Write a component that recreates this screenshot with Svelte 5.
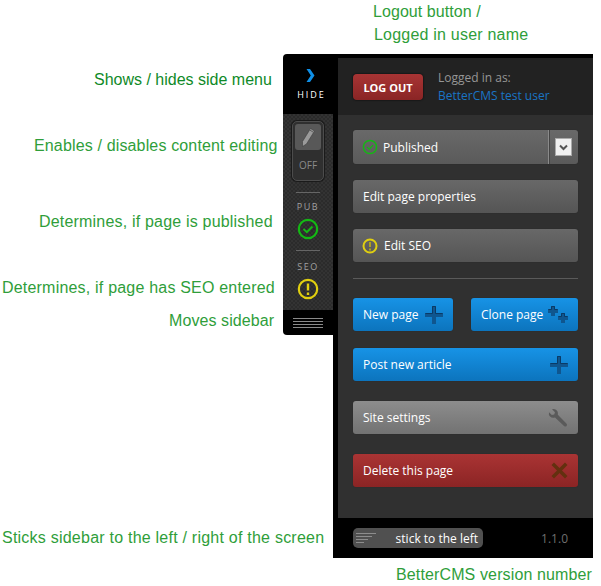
<script>
  const notes = [
    { text: "Logout button /", x: 373, y: 2, ls: 0.07 },
    { text: "Logged in user name", x: 374, y: 25, ls: 0.21 },
    { text: "Shows / hides side menu", x: 94, y: 70, ls: 0, dark: true },
    { text: "Enables / disables content editing", x: 34, y: 136, ls: 0.15 },
    { text: "Determines, if page is published", x: 39, y: 212, ls: 0.19 },
    { text: "Determines, if page has SEO entered", x: 2, y: 278, ls: 0.2 },
    { text: "Moves sidebar", x: 169, y: 311, ls: 0.08 },
    { text: "Sticks sidebar to the left / right of the screen", x: 2, y: 528, ls: 0.23 },
    { text: "BetterCMS version number", x: 396, y: 565, ls: 0.13 }
  ];
</script>

<div class="canvas">
  {#each notes as note}
    <span class="note" class:dark={note.dark} style="left: {note.x}px; top: {note.y}px; letter-spacing: {note.ls}px;">{note.text}</span>
  {/each}

  <div class="sidebar">
    <div class="rail">
      <div class="rail-top">
        <svg class="chevron" width="9" height="13" viewBox="0 0 9 13">
          <path d="M0.500 0 L4 0 L8.500 6.500 L4 13 L0.500 13 L4.800 6.500 Z" fill="#0f8fe6" />
        </svg>
        <span class="hide">HIDE</span>
      </div>
      <div class="rail-body">
        <div class="toggle">
          <div class="toggle-btn">
            <svg width="16" height="21" viewBox="0 0 16 21">
              <path d="M10.500 1.500 L14.500 4 L6.500 17 L2.500 19.500 L2.500 14.500 Z" fill="#9a9a9a" stroke="#3c3c3c" stroke-width=".6" />
              <path d="M9.700 3 L13.600 5.400" stroke="#5e5e5e" stroke-width="1" />
            </svg>
          </div>
          <span>OFF</span>
        </div>
        <div class="rule"></div>
        <span class="tag">PUB</span>
        <svg class="status" width="22" height="22" viewBox="0 0 22 22">
          <circle cx="11" cy="11" r="9.200" fill="none" stroke="#14b814" stroke-width="2.200" />
          <path d="M6.500 11 L9.800 14.200 L15.500 8.500" fill="none" stroke="#14b814" stroke-width="2" />
        </svg>
        <div class="rule second"></div>
        <span class="tag seo-tag">SEO</span>
        <svg class="status" width="22" height="22" viewBox="0 0 22 22">
          <circle cx="11" cy="11" r="9.200" fill="none" stroke="#e0cf10" stroke-width="2.200" />
          <path d="M11 5.500 V12.500 M11 14.500 V17" fill="none" stroke="#e0cf10" stroke-width="2.400" />
        </svg>
      </div>
      <div class="grip">
        <i></i><i></i><i></i><i></i>
      </div>
    </div>

    <div class="panel">
      <header>
        <button class="logout">LOG OUT</button>
        <div class="who">
          <span>Logged in as:</span>
          <span class="user">BetterCMS test user</span>
        </div>
      </header>

      <div class="content">
        <div class="btn grey published">
          <svg width="16" height="16" viewBox="0 0 16 16">
            <circle cx="8" cy="8" r="6.600" fill="none" stroke="#14b814" stroke-width="1.500" />
            <path d="M4.800 8 L7.200 10.200 L11 6.200" fill="none" stroke="#14b814" stroke-width="1.300" />
          </svg>
          <span>Published</span>
          <div class="select">
            <div class="arrow">
              <svg width="9" height="7" viewBox="0 0 9 7">
                <path d="M1 1.500 L4.500 5 L8 1.500" fill="none" stroke="#555" stroke-width="2" />
              </svg>
            </div>
          </div>
        </div>

        <div class="btn grey">Edit page properties</div>

        <div class="btn grey seo">
          <svg width="16" height="16" viewBox="0 0 16 16">
            <circle cx="8" cy="8" r="6.500" fill="none" stroke="#e0cf10" stroke-width="2" />
            <path d="M8 4 V9 M8 10.500 V12.500" stroke="#b5a81c" stroke-width="1.800" />
          </svg>
          <span>Edit SEO</span>
        </div>

        <div class="divider"></div>

        <div class="pair">
          <div class="btn blue new">
            <span>New page</span>
            <svg width="18" height="18" viewBox="0 0 18 18">
              <path d="M7 0 H11 V7 H18 V11 H11 V18 H7 V11 H0 V7 H7 Z" fill="#0f568f" />
              <path d="M7.500 .5 H10.500 V7.500 H17.500 M0.500 7.500 H7.500 V.5" fill="none" stroke="#0a3a66" />
            </svg>
          </div>
          <div class="btn blue clone">
            <span>Clone page</span>
            <svg width="20" height="18" viewBox="0 0 20 18">
              <path d="M3 0 H7 V3 H10 V7 H7 V10 H3 V7 H0 V3 H3 Z" fill="#0f568f" />
              <path d="M13 7 H17 V10 H20 V14 H17 V17 H13 V14 H10 V10 H13 Z" fill="#0f568f" />
              <path d="M3.500 .5 H6.500 V3.500 H9.500 M.5 3.500 H3.500 V.5 M13.500 7.500 H16.500 V10.500 H19.500 M10.500 10.500 H13.500 V7.500" fill="none" stroke="#0a3a66" />
            </svg>
          </div>
        </div>

        <div class="btn blue wide">
          <span>Post new article</span>
          <svg width="18" height="18" viewBox="0 0 18 18">
            <path d="M7 0 H11 V7 H18 V11 H11 V18 H7 V11 H0 V7 H7 Z" fill="#0f568f" />
            <path d="M7.500 .5 H10.500 V7.500 H17.500 M0.500 7.500 H7.500 V.5" fill="none" stroke="#0a3a66" />
          </svg>
        </div>

        <div class="btn light wide">
          <span>Site settings</span>
          <svg width="20" height="20" viewBox="0 0 20 20">
            <path d="M7 9.500 L16 18 Q17.500 19.200 18.600 18 Q19.600 16.800 18.400 15.500 L9.800 6.800 Q10.400 3.500 8 1.800 Q6.200 .6 4 1.200 L7 4.200 L6.200 6.400 L3.800 7 L1 4.200 Q.4 6.800 2 8.500 Q4 10.500 7 9.500 Z" fill="#5a5a5a" />
          </svg>
        </div>

        <div class="btn red wide">
          <span>Delete this page</span>
          <svg width="17" height="17" viewBox="0 0 17 17">
            <path d="M0.500 3 L3 .5 L8.500 6 L14 .5 L16.500 3 L11 8.500 L16.500 14 L14 16.500 L8.500 11 L3 16.500 L.5 14 L6 8.500 Z" fill="#63300f" />
          </svg>
        </div>
      </div>

      <footer>
        <div class="stick">
          <div class="lines"><i></i><i></i><i></i><i></i></div>
          <span>stick to the left</span>
        </div>
        <span class="version">1.1.0</span>
      </footer>
    </div>
  </div>
</div>

<style>
  :global(body) {
    margin: 0;
    background: #fff;
  }

  .canvas {
    position: relative;
    width: 601px;
    height: 586px;
    overflow: hidden;
    font-family: "Open Sans", sans-serif;
  }

  .note {
    position: absolute;
    font: 16px/19px "Liberation Sans", Arial, sans-serif;
    color: #2f9e3a;
    white-space: nowrap;
  }

  .note.dark {
    color: #0f8a28;
  }

  .sidebar {
    position: absolute;
    left: 283px;
    top: 54px;
    width: 310px;
    height: 504px;
    display: flex;
    align-items: flex-start;
  }

  .rail {
    width: 50px;
    height: 281px;
    background: #000;
    border-radius: 4px 0 0 4px;
    overflow: hidden;
    display: flex;
    flex-direction: column;
  }

  .rail-top {
    height: 60px;
    display: flex;
    flex-direction: column;
    align-items: center;
    padding: 15px 0 0 5px;
    box-sizing: border-box;
  }

  .chevron {
    display: block;
  }

  .hide {
    margin-top: 7px;
    font-size: 9px;
    line-height: 12px;
    letter-spacing: 2px;
    color: #fff;
    margin-right: -2px;
  }

  .rail-body {
    height: 196px;
    background-color: #2b2b2b;
    background-image:
      linear-gradient(45deg, #333 25%, transparent 25%, transparent 75%, #333 75%),
      linear-gradient(45deg, #333 25%, transparent 25%, transparent 75%, #333 75%);
    background-size: 4px 4px;
    background-position: 0 0, 2px 2px;
    display: flex;
    flex-direction: column;
    align-items: center;
    padding-top: 7px;
    box-sizing: border-box;
  }

  .toggle {
    width: 32px;
    height: 60px;
    box-sizing: border-box;
    border: 1px solid #4c4c4c;
    border-radius: 5px;
    background: #2f2f2f;
    display: flex;
    flex-direction: column;
    align-items: center;
    padding-top: 2px;
    color: #8a8a8a;
    font-size: 10px;
    line-height: 14px;
    box-shadow: 0 0 0 1px #1a1a1a;
  }

  .toggle-btn {
    width: 26px;
    height: 26px;
    background: #585858;
    border-radius: 3px;
    display: flex;
    align-items: center;
    justify-content: center;
    margin-bottom: 8px;
  }

  .rule {
    width: 24px;
    height: 1px;
    background: #666;
    margin-top: 11px;
    flex: none;
  }

  .rule.second {
    margin-top: 10px;
  }

  .tag {
    margin-top: 8px;
    font-size: 9px;
    line-height: 12px;
    letter-spacing: 1.5px;
    color: #a0a0a0;
  }

  .seo-tag {
    margin-top: 10px;
  }

  .status {
    display: block;
    margin-top: 5px;
    flex: none;
  }

  .grip {
    flex: 1;
    display: flex;
    flex-direction: column;
    align-items: center;
    justify-content: center;
    gap: 2px;
  }

  .grip i {
    display: block;
    width: 30px;
    height: 1px;
    background: #8a8a8a;
  }

  .panel {
    width: 260px;
    height: 504px;
    box-sizing: border-box;
    background: #000;
    padding: 4px 0 0 5px;
    display: flex;
    flex-direction: column;
  }

  header {
    height: 57px;
    flex: none;
    background: #222;
    display: flex;
    align-items: center;
    gap: 15px;
    padding: 1px 0 0 15px;
    box-sizing: border-box;
  }

  .logout {
    width: 70px;
    height: 26px;
    border: 0;
    border-radius: 4px;
    padding: 0;
    background: linear-gradient(#a83434, #8a2525);
    color: #fff;
    font: 700 11px "Open Sans", sans-serif;
    box-shadow: 0 0 2px #000;
  }

  .who {
    display: flex;
    flex-direction: column;
    font-size: 12px;
    line-height: 18px;
    color: #969696;
  }

  .user {
    color: #1a74c4;
  }

  .content {
    flex: 1;
    background: #303030;
    padding: 15px;
    display: flex;
    flex-direction: column;
    box-sizing: border-box;
  }

  .btn {
    height: 33px;
    flex: none;
    box-sizing: border-box;
    border-radius: 3px;
    display: flex;
    align-items: center;
    padding: 0 10px;
    color: #fff;
    font-size: 12px;
    box-shadow: 0 0 1px #222;
  }

  .btn svg {
    flex: none;
  }

  .grey {
    background: linear-gradient(#686868, #555);
  }

  .blue {
    background: linear-gradient(#1793e6, #0c74bd);
  }

  .light {
    background: linear-gradient(#8d8d8d, #727272);
  }

  .red {
    background: linear-gradient(#aa3434, #8b2424);
  }

  .published {
    height: 34px;
    padding: 0 0 0 9px;
    gap: 5px;
    background: linear-gradient(#696969, #5a5a5a);
    margin-bottom: 16px;
  }

  .published > span {
    flex: 1;
  }

  .select {
    width: 29px;
    height: 100%;
    border-left: 1px solid #8a8a8a;
    box-shadow: inset 1px 0 0 #444;
    display: flex;
    align-items: center;
    justify-content: center;
  }

  .arrow {
    width: 17px;
    height: 18px;
    box-sizing: border-box;
    background: #f0f0f0;
    border: 1px solid #aaa;
    display: flex;
    align-items: center;
    justify-content: center;
  }

  .seo {
    margin-top: 16px;
    padding-left: 9px;
    gap: 6px;
  }

  .divider {
    height: 1px;
    background: #5a5a5a;
    margin: 16px 0 19px;
  }

  .pair {
    display: flex;
    gap: 18px;
  }

  .new {
    width: 100px;
    justify-content: space-between;
    padding-right: 10px;
  }

  .clone {
    width: 107px;
    padding-right: 10px;
    justify-content: space-between;
  }

  .wide {
    justify-content: space-between;
  }

  .blue.wide {
    margin-top: 17px;
  }

  .light.wide {
    margin-top: 20px;
  }

  .red.wide {
    margin-top: 20px;
  }

  footer {
    height: 40px;
    flex: none;
    background: #000;
    display: flex;
    align-items: center;
    justify-content: space-between;
    padding: 0 25px 0 15px;
  }

  .stick {
    width: 130px;
    height: 20px;
    border-radius: 5px;
    background: #505050;
    box-sizing: border-box;
    display: flex;
    align-items: center;
    justify-content: space-between;
    padding: 0 5px 0 3px;
    color: #fff;
    font-size: 12px;
  }

  .lines {
    display: flex;
    flex-direction: column;
    gap: 2px;
  }

  .lines i {
    display: block;
    height: 1px;
    width: 20px;
    background: #8d8d8d;
  }

  .lines i:nth-child(2) {
    width: 16px;
  }

  .lines i:nth-child(3) {
    width: 12px;
  }

  .lines i:nth-child(4) {
    width: 8px;
  }

  .version {
    color: #6f6f6f;
    font-size: 12px;
  }
</style>
